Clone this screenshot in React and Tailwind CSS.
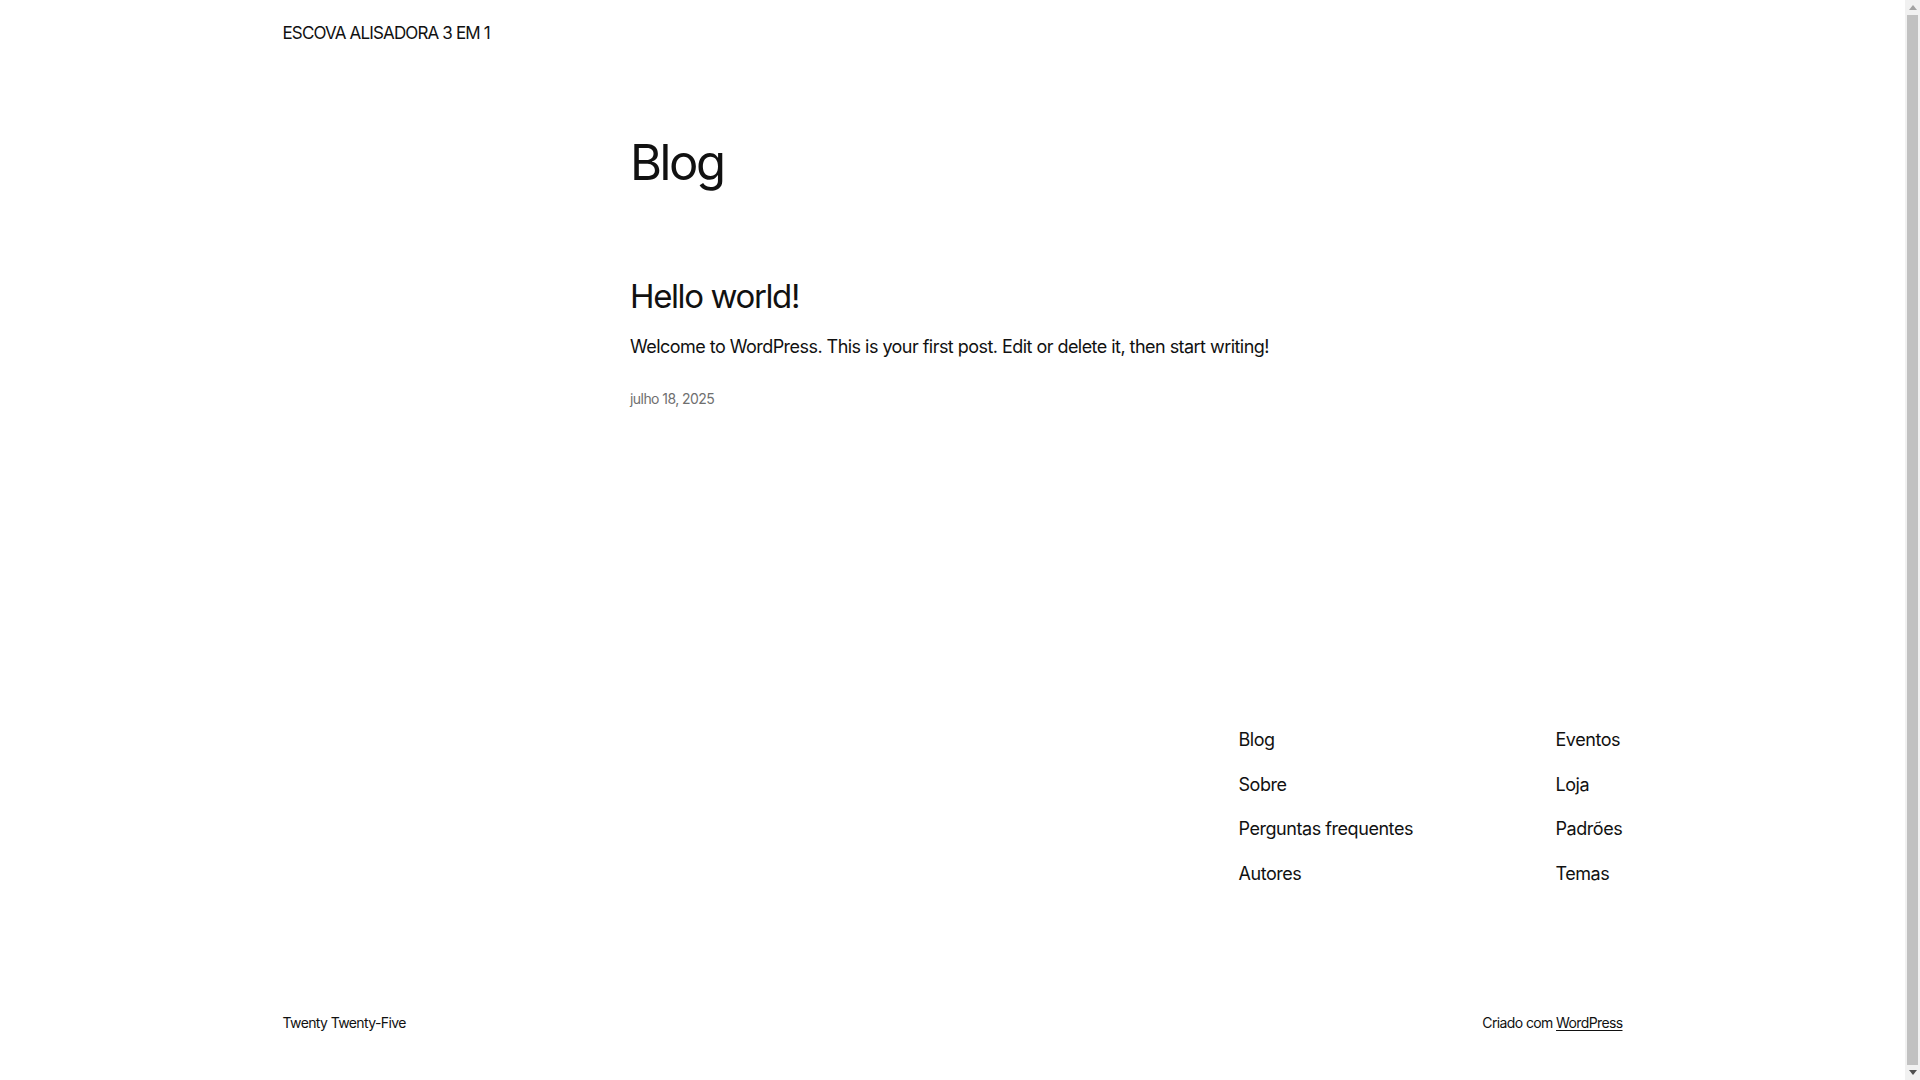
const font = { fontFamily: "Inter, 'Noto Sans', sans-serif" };

const navLeft = ["Blog", "Sobre", "Perguntas frequentes", "Autores"];
const navRight = ["Eventos", "Loja", "Padrões", "Temas"];

function Scrollbar() {
  return (
    <div className="w-[15px] h-[1080px] shrink-0 bg-[#f1f1f1] flex flex-col items-center">
      <div className="h-[15px] flex items-center justify-center">
        <svg width="8" height="5" viewBox="0 0 8 5"><path d="M0 5 L4 0 L8 5 Z" fill="#a3a3a3" /></svg>
      </div>
      <div className="flex-1 w-[11px] bg-[#c1c1c1]" />
      <div className="h-[15px] flex items-center justify-center">
        <svg width="8" height="5" viewBox="0 0 8 5"><path d="M0 0 L8 0 L4 5 Z" fill="#505050" /></svg>
      </div>
    </div>
  );
}

export default function App() {
  return (
    <div style={font} className="flex h-screen overflow-hidden bg-white text-[#111111] antialiased">
      <div className="flex-1 min-w-0">
        <header className="max-w-[1340px] mx-auto pt-[21px]">
          <a href="#" className="text-[17px] leading-[1.2] tracking-[-0.05em]">ESCOVA ALISADORA 3 EM 1</a>
        </header>

        <main className="max-w-[645px] mx-auto mt-[89px]">
          <h1 className="text-[49px] leading-[1.2] tracking-[-0.05em]">Blog</h1>
          <article className="mt-[84px]">
            <h2 className="text-[33px] leading-[1.2] tracking-[-0.042em]">Hello world!</h2>
            <p className="mt-[17px] text-[18px] leading-[1.5] tracking-[-0.03em]">
              Welcome to WordPress. This is your first post. Edit or delete it, then start writing!
            </p>
            <p className="mt-[28px] text-[14px] leading-[1.5] tracking-[-0.04em] text-[#6f6f6f]">julho 18, 2025</p>
          </article>
        </main>

        <footer className="max-w-[1340px] mx-auto mt-[317px]">
          <nav className="flex justify-end">
            <ul className="w-[317px] flex flex-col gap-[17.5px]">
              {navLeft.map((item) => (
                <li key={item} className="text-[18px] leading-[27px] tracking-[-0.025em] whitespace-nowrap">{item}</li>
              ))}
            </ul>
            <ul className="w-[67px] flex flex-col gap-[17.5px]">
              {navRight.map((item) => (
                <li key={item} className="text-[18px] leading-[27px] tracking-[-0.025em] whitespace-nowrap">{item}</li>
              ))}
            </ul>
          </nav>
          <div className="flex justify-between items-center mt-[125px] text-[14px] leading-[21px] tracking-[-0.044em]">
            <span>Twenty Twenty-Five</span>
            <span>
              Criado com <a href="#" className="underline underline-offset-2">WordPress</a>
            </span>
          </div>
        </footer>
      </div>
      <Scrollbar />
    </div>
  );
}
